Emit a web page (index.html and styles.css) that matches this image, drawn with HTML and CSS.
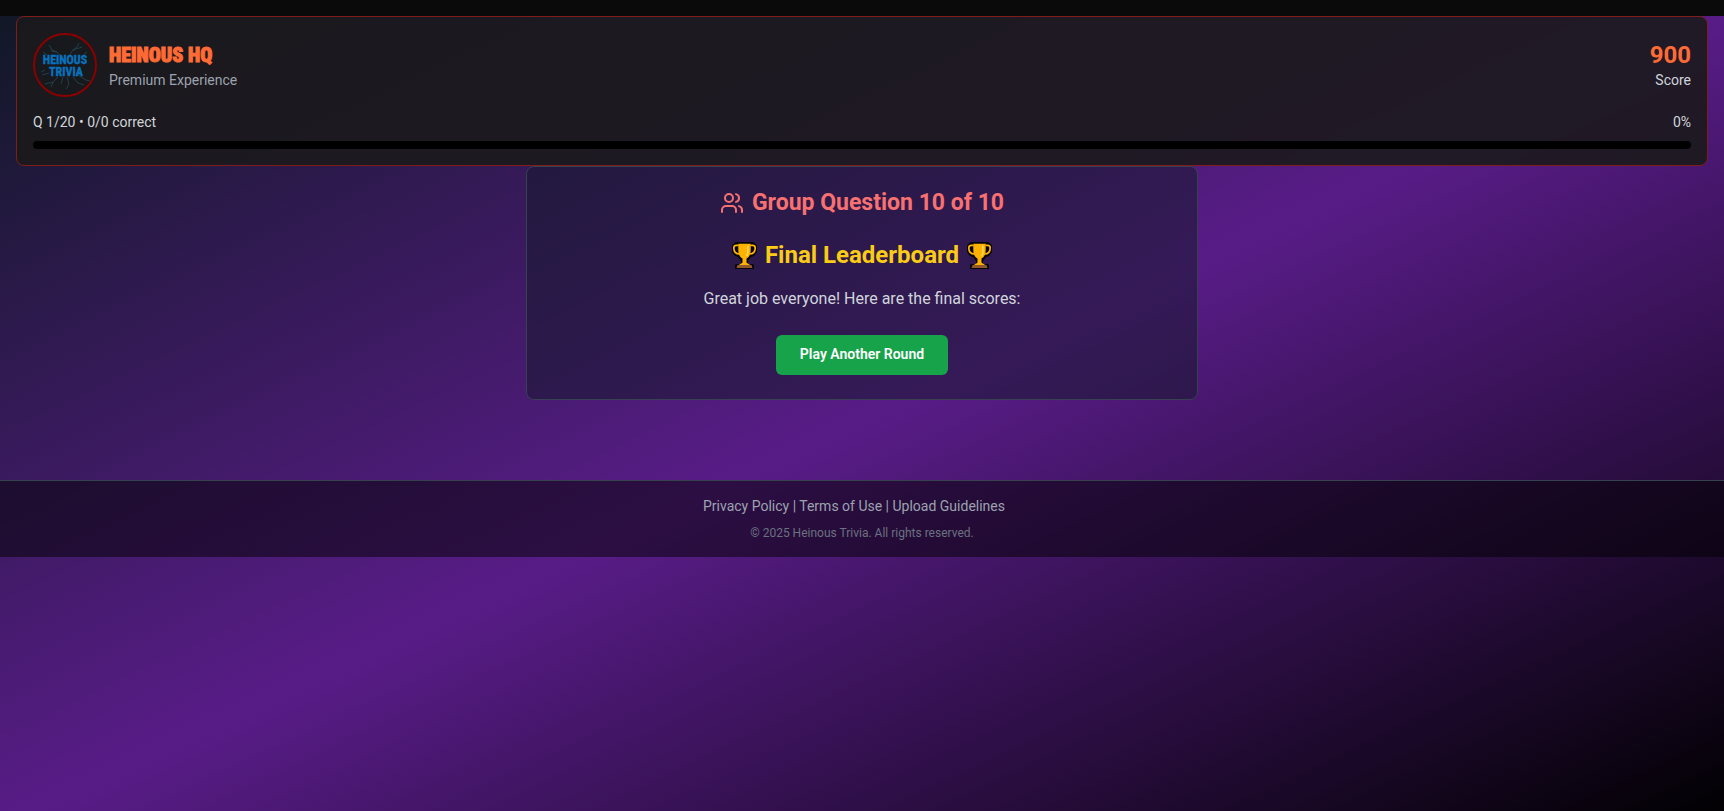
FILE: index.html
```html
<!DOCTYPE html>
<html lang="en">
<head>
<meta charset="utf-8">
<meta name="viewport" content="width=device-width, initial-scale=1">
<title>Heinous Trivia</title>
<link rel="stylesheet" href="styles.css">
</head>
<body>
<svg width="0" height="0" class="defs" aria-hidden="true">
  <symbol id="trophy" viewBox="0 0 25 27">
    <path d="M4 0h17l3 2 1 2v6l-3 4-3 1-3 4v3h5l1 1v4H3v-4l1-1h5v-3l-3-4-3-1-3-4V4l1-2z" fill="#050408"/>
    <path d="M6.500 3.300H4.200Q1.800 3.300 1.800 6C1.800 10 4 12 7.500 12M18.500 3.300h2.300Q23.200 3.300 23.200 6C23.200 10 21 12 17.500 12" fill="none" stroke="#ffb500" stroke-width="1.700"/>
    <path d="M6.300 1.800h12.400v6.200c0 4.500-1.600 7-4.200 8.600v4c1 1.400 2.500 1.400 3.500 2.400H7c1-1 2.500-1 3.500-2.400v-4C7.900 15 6.300 12.500 6.300 8z" fill="#ffb300"/>
    <path d="M15.800 3.500v7.500q-.3 2-1.500 3" fill="none" stroke="#ffd35c" stroke-width="1.600"/>
    <path d="M5.500 23h14l1 3h-16z" fill="#925a2c"/>
  </symbol>
</svg>
<div class="top-strip"></div>
<div class="page">
  <header class="score-card">
    <div class="row">
      <div class="brand">
        <svg class="logo" viewBox="0 0 64 64" role="img" aria-label="Heinous Trivia">
          <circle cx="32" cy="32" r="31" fill="#17191c" stroke="#8b0000" stroke-width="2"/>
          <g fill="none" stroke="#24505f" stroke-width="1" opacity=".7">
            <path d="M28 23l-4-4-5-2-3-5M24 19l-6-1M36 23l4-6 4-3 2-4M40 17l9-3M48 24l6-5M14 22l-4-3M45 42l8 5 4 1M40 44l5 6 6 2M34 44l2 7-3 5M25 44l-5 5-8 2M20 49l-2 5M16 40l-7 2M12 37l-4 2M30 44l-2 7"/>
          </g>
          <g class="logo-text" text-anchor="middle">
            <text x="32" y="31">HEINOUS</text>
            <text x="33" y="43">TRIVIA</text>
          </g>
        </svg>
        <div>
          <h1 class="title">HEINOUS HQ</h1>
          <p class="sub">Premium Experience</p>
        </div>
      </div>
      <div class="score">
        <div class="score-value">900</div>
        <div class="small">Score</div>
      </div>
    </div>
    <div class="row progress-row small">
      <span>Q 1/20 • 0/0 correct</span>
      <span>0%</span>
    </div>
    <div class="track" role="progressbar" aria-label="Progress" aria-valuemin="0" aria-valuemax="100" aria-valuenow="0"></div>
  </header>
  <main class="panel">
    <h2 class="group">
      <svg class="users" viewBox="0 0 24 24" fill="none" stroke="currentColor" stroke-width="2" stroke-linecap="round" stroke-linejoin="round" aria-hidden="true"><path d="M16 21v-2a4 4 0 0 0-4-4H6a4 4 0 0 0-4 4v2"/><circle cx="9" cy="7" r="4"/><path d="M22 21v-2a4 4 0 0 0-3-3.870M16 3.130a4 4 0 0 1 0 7.750"/></svg>
      Group Question 10 of 10
    </h2>
    <h3 class="final">
      <svg class="trophy" aria-hidden="true"><use href="#trophy"/></svg>
      Final Leaderboard
      <svg class="trophy" aria-hidden="true"><use href="#trophy"/></svg>
    </h3>
    <p class="message">Great job everyone! Here are the final scores:</p>
    <button type="button" class="play">Play Another Round</button>
  </main>
  <footer class="footer">
    <nav class="links"><a href="#privacy">Privacy Policy</a> | <a href="#terms">Terms of Use</a> | <a href="#upload">Upload Guidelines</a></nav>
    <p class="copyright">© 2025 Heinous Trivia. All rights reserved.</p>
  </footer>
</div>
</body>
</html>
```
FILE: styles.css
```css
* { box-sizing: border-box; }
body {
  display: flex;
  flex-direction: column;
  min-height: 100vh;
  margin: 0;
  background: #0a0a0a;
  color: #d1d5db;
  font: 16px/24px Roboto, sans-serif;
}
h1, h2, h3, p { margin: 0; }
.defs { position: absolute; }
.top-strip { height: 16px; }
.page {
  flex: 1;
  background: linear-gradient(to bottom right, #111827, #581c87, #000) 0 0 / 100% 100vh;
}
.score-card {
  margin: 0 16px;
  padding: 16px;
  border: 1px solid #7f1d1d;
  border-radius: 8px;
  background: rgba(27, 26, 28, 0.9);
}
.row {
  display: flex;
  align-items: center;
  justify-content: space-between;
}
.brand { display: flex; align-items: center; gap: 12px; }
.logo { display: block; width: 64px; height: 64px; }
.logo-text {
  font: bold 12px "Roboto Condensed", Roboto, sans-serif;
  fill: #0872bd;
  stroke: #0872bd;
  stroke-width: 0.4px;
}
.title {
  color: #ff6b35;
  font: 900 20px/30px "Roboto Condensed", Roboto, sans-serif;
  -webkit-text-stroke: 1px #ff6b35;
}
.sub { color: #9ca3af; font-size: 14px; line-height: 20px; }
.small { font-size: 14px; line-height: 20px; }
.score { text-align: right; }
.score-value { color: #ff6b35; font-size: 24px; line-height: 30px; font-weight: 700; }
.progress-row { margin: 15px 0 9px; }
.track { height: 8px; border-radius: 4px; background: #000; }
.panel {
  max-width: 672px;
  margin: 0 auto;
  padding: 24px;
  border: 1px solid #374151;
  border-radius: 8px;
  background: rgba(17, 24, 39, 0.5);
  text-align: center;
}
.group, .final {
  display: flex;
  align-items: center;
  justify-content: center;
  gap: 8px;
  font-size: 24px;
  font-weight: 700;
}
.group { color: #f87171; font-size: 23px; line-height: 24px; }
.users { width: 24px; height: 24px; }
.final { margin-top: 24px; color: #facc15; line-height: 32px; }
.trophy { width: 25px; height: 27px; }
.message { margin: 16px 0 24px; }
.play {
  height: 40px;
  padding: 0 24px 2px;
  border: 0;
  border-radius: 6px;
  background: #16a34a;
  color: #fff;
  font: 600 14px/20px Roboto, sans-serif;
}
.footer {
  margin-top: 80px;
  padding: 15px 16px 16px;
  border-top: 1px solid #374151;
  background: rgba(0, 0, 0, 0.5);
  text-align: center;
}
.links { margin-right: 16px; color: #9ca3af; font-size: 14px; line-height: 20px; }
.links a { color: inherit; text-decoration: none; }
.copyright { margin-top: 9px; color: #6b7280; font-size: 12px; line-height: 16px; }
```
